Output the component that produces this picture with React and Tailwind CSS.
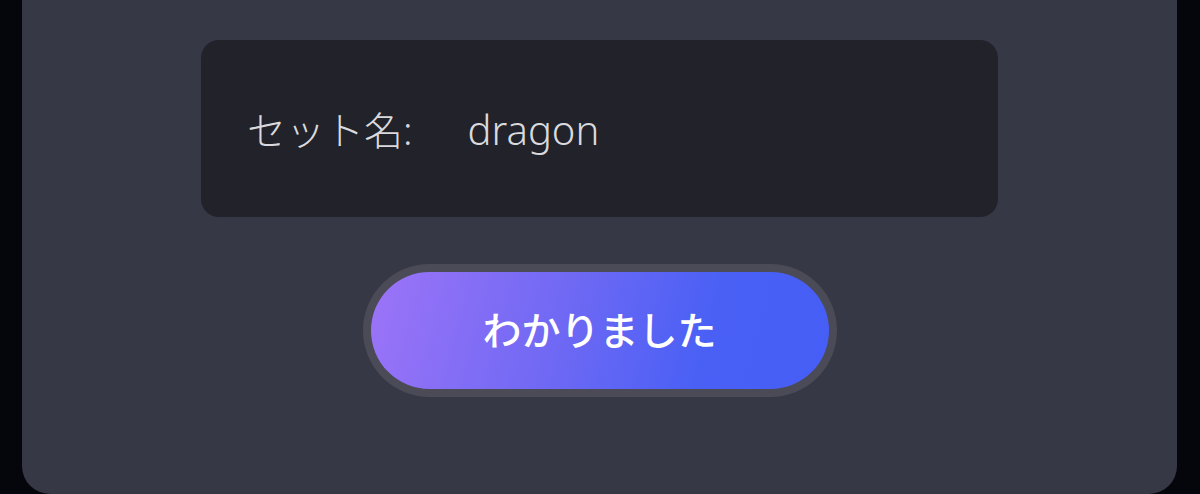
export default function App() {
  return (
    <div className="h-[494px] w-[1200px] overflow-hidden bg-[#05060b] pl-[22px] pr-[23px]">
      {/* Dialog panel */}
      <div className="flex h-full flex-col items-center rounded-b-[28px] bg-[#373845] pt-[40px]">
        {/* Info box */}
        <div
          className="flex h-[177px] w-[797px] items-center rounded-[18px] bg-[#22222a] pl-[46px] pt-[3px] text-[39px] font-light text-[#dadade]"
          style={{ fontFamily: '"Noto Sans", "Noto Sans CJK JP", sans-serif' }}
        >
          <span>セット名:</span>
          <span className="ml-[55px] text-[40px]">dragon</span>
        </div>

        {/* Confirm button */}
        <div className="mt-[47px] rounded-full bg-[#4b4a57] p-[8px]">
          <button
            className="flex h-[117px] w-[458px] items-center justify-center rounded-full bg-[linear-gradient(105deg,#9c74f7_0%,#7169f4_40%,#4a60f5_72%,#455ef5_100%)] pb-[4px] text-[39px] font-medium text-white"
            style={{ fontFamily: '"Noto Sans CJK JP", sans-serif' }}
          >
            わかりました
          </button>
        </div>
      </div>
    </div>
  );
}
